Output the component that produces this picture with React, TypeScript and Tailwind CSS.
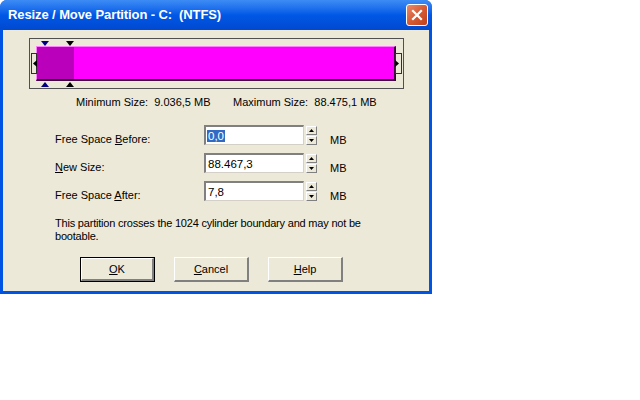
import React from 'react'

const font = { fontFamily: '"Liberation Sans", Arial, sans-serif' }

function Spin() {
  return (
    <div className="flex flex-col gap-[1px] ml-[2px] mt-[1px]">
      {['up', 'down'].map((d) => (
        <div
          key={d}
          className="w-[11px] h-[9px] bg-[#ECE9D8] border-t border-l border-white border-r border-b border-r-[#808080] border-b-[#808080] flex items-center justify-center"
        >
          <svg width="5" height="3" viewBox="0 0 5 3">
            {d === 'up' ? <polygon points="2.5,0 5,3 0,3" fill="#000" /> : <polygon points="0,0 5,0 2.5,3" fill="#000" />}
          </svg>
        </div>
      ))}
    </div>
  )
}

function Field({ label, accel, value, selected }: { label: string; accel: number; value: string; selected?: boolean }) {
  return (
    <div className="flex items-start h-[20px]">
      <div className="w-[149px] pt-[8px] leading-[13px]">
        {label.slice(0, accel)}
        <span className="underline">{label[accel]}</span>
        {label.slice(accel + 1)}
      </div>
      <div className="w-[100px] h-[20px] bg-white border-t-2 border-l-2 border-t-[#808080] border-l-[#808080] border-r border-b border-r-[#d4d0c8] border-b-[#d4d0c8] pl-[1px] pt-[2px] text-[11.5px] leading-[14px]">
        {selected ? <span className="bg-[#316AC5] text-white px-[1px]">{value}</span> : <span className="px-[1px]">{value}</span>}
      </div>
      <Spin />
      <div className="ml-[13px] pt-[9px] leading-[13px]">MB</div>
    </div>
  )
}

function Btn({ label, accel, isDefault }: { label: string; accel: number; isDefault?: boolean }) {
  return (
    <div className={'w-[75px] h-[25px] ' + (isDefault ? 'border border-black' : '')}>
      <div className="w-full h-full bg-[#ECE9D8] border-t border-l border-t-white border-l-white border-r-2 border-b-2 border-r-[#808080] border-b-[#808080] flex items-center justify-center">
        {label.slice(0, accel)}
        <span className="underline">{label[accel]}</span>
        {label.slice(accel + 1)}
      </div>
    </div>
  )
}

export default function App() {
  return (
    <div className="w-[640px] h-[400px] bg-white text-[11px] text-black" style={font}>
      <div className="w-[432px] h-[294px] flex flex-col bg-[#0054E3] rounded-t-[7px] overflow-hidden">
        {/* Title bar */}
        <div className="h-[30px] flex items-center justify-between pl-[8px] pr-[4px] bg-gradient-to-b from-[#3d8cf5] via-[#0058e6] to-[#0049d0]">
          <span className="text-white font-bold text-[13px] tracking-[-0.1px]">Resize / Move Partition - C:&nbsp; (NTFS)</span>
          <div className="w-[22px] h-[22px] rounded-[3px] border border-white bg-gradient-to-br from-[#e8896a] via-[#d65b33] to-[#c0401b] flex items-center justify-center">
            <svg width="12" height="12" viewBox="0 0 12 12">
              <path d="M2 2 L10 10 M10 2 L2 10" stroke="#fff" strokeWidth="2.2" strokeLinecap="square" />
            </svg>
          </div>
        </div>

        {/* Body */}
        <div className="flex-1 mx-[3px] mb-[3px] bg-[#ECE9D8] flex flex-col">
          {/* Partition slider */}
          <div className="mt-[8px] ml-[26px] w-[375px] h-[51px] border border-[#505050] relative pl-[6px] pt-[7px]">
            <div className="w-[360px] h-[35px] flex border-r-2 border-b-2 border-[#3a003a] border-t border-l border-t-[#ff80ff] border-l-[#ff80ff]">
              <div className="w-[37px] bg-[#BB00BB]" />
              <div className="flex-1 bg-[#FF00FF]" />
            </div>
            {/* left handle */}
            <div className="absolute left-[1px] top-[14px] w-[6px] h-[21px] bg-[#ECE9D8] border border-[#303030] flex items-center justify-end">
              <svg width="4" height="7" viewBox="0 0 4 7" className="mr-[-1px]">
                <polygon points="4,0 4,7 0,3.5" fill="#000" />
              </svg>
            </div>
            {/* right handle */}
            <div className="absolute left-[365px] top-[14px] w-[7px] h-[21px] bg-[#ECE9D8] border border-[#303030] flex items-center justify-start">
              <svg width="4" height="7" viewBox="0 0 4 7" className="ml-[-1px]">
                <polygon points="0,0 0,7 4,3.5" fill="#000" />
              </svg>
            </div>
            {/* markers */}
            <svg className="absolute left-[11px] top-[2px]" width="8" height="5" viewBox="0 0 8 5">
              <polygon points="0,0 8,0 4,5" fill="#000080" />
            </svg>
            <svg className="absolute left-[36px] top-[2px]" width="8" height="5" viewBox="0 0 8 5">
              <polygon points="0,0 8,0 4,5" fill="#000" />
            </svg>
            <svg className="absolute left-[11px] top-[43px]" width="8" height="5" viewBox="0 0 8 5">
              <polygon points="4,0 8,5 0,5" fill="#000080" />
            </svg>
            <svg className="absolute left-[36px] top-[43px]" width="8" height="5" viewBox="0 0 8 5">
              <polygon points="4,0 8,5 0,5" fill="#000" />
            </svg>
          </div>

          {/* Min / Max */}
          <div className="mt-[7px] flex leading-[13px]">
            <div className="ml-[73px] w-[157px]">Minimum Size:&nbsp; 9.036,5 MB</div>
            <div>Maximum Size:&nbsp; 88.475,1 MB</div>
          </div>

          {/* Fields */}
          <div className="mt-[16px] ml-[52px] flex flex-col gap-[8px]">
            <Field label="Free Space Before:" accel={11} value="0,0" selected />
            <Field label="New Size:" accel={0} value="88.467,3" />
            <Field label="Free Space After:" accel={11} value="7,8" />
          </div>

          {/* Warning */}
          <div className="mt-[16px] ml-[52px] w-[320px] leading-[13px] tracking-[-0.2px]">
            This partition crosses the 1024 cylinder boundary and may not be bootable.
          </div>

          {/* Buttons */}
          <div className="mt-[14px] ml-[77px] flex gap-[19px]">
            <Btn label="OK" accel={0} isDefault />
            <Btn label="Cancel" accel={0} />
            <Btn label="Help" accel={0} />
          </div>
        </div>
      </div>
    </div>
  )
}
